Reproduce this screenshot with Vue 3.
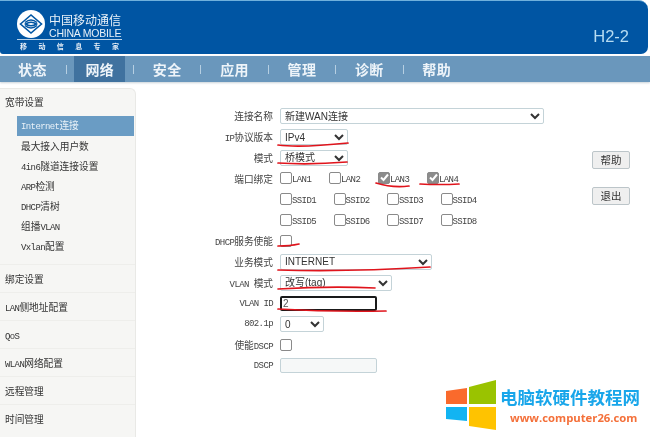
<script setup>
const navItems = [
  { label: '状态' }, { label: '网络', active: true }, { label: '安全' }, { label: '应用' },
  { label: '管理' }, { label: '诊断' }, { label: '帮助' }
]
const subItems = ['Internet连接', '最大接入用户数', '4in6隧道连接设置', 'ARP检测', 'DHCP清树', '组播VLAN', 'Vxlan配置']
const menuItems = ['绑定设置', 'LAN侧地址配置', 'QoS', 'WLAN网络配置', '远程管理', '时间管理']
const lanPorts = [
  { name: 'LAN1', checked: false }, { name: 'LAN2', checked: false },
  { name: 'LAN3', checked: true }, { name: 'LAN4', checked: true }
]
const ssidRows = [['SSID1', 'SSID2', 'SSID3', 'SSID4'], ['SSID5', 'SSID6', 'SSID7', 'SSID8']]
const scribbles = [
  'M278 145 Q300 148 348 143',
  'M278 163 Q310 165 347 162',
  'M376 183 Q392 188 409 186',
  'M420 184 Q440 185 459 184',
  'M278 246 Q290 246 299 244',
  'M278 270 Q350 272 430 267',
  'M278 289 Q330 286 375 288',
  'M278 309 Q330 312 386 311'
]
// Latin runs are condensed against CJK, like the half-width glyphs of the original bitmap font
const runs = (text) => (text.match(/[\x20-\x7e]+|[^\x20-\x7e]+/g) || []).map((t) => ({
  t,
  latin: /^[\x20-\x7e]/.test(t)
}))
</script>

<template>
  <div class="page">
    <header class="top">
      <div class="logo">
        <div class="logo-main">
          <svg class="logo-mark" width="28" height="28" viewBox="0 0 28 28">
            <circle cx="14" cy="14" r="14" fill="#fff" />
            <g fill="none" stroke="#0055a3" stroke-width="1.6">
              <path d="M3.5 14 L14 5 L24.5 14 L14 23 Z" />
              <path d="M8 12.5 Q14 7.5 20 12.5" />
              <path d="M8 15.5 Q14 20.5 20 15.5" />
              <path d="M8.5 14 Q14 10.5 19.5 14 Q14 17.5 8.5 14Z" />
            </g>
          </svg>
          <div class="logo-names">
            <div class="logo-cn">中国移动通信</div>
            <div class="logo-en">CHINA MOBILE</div>
          </div>
        </div>
        <div class="logo-slogan"><span>移</span><span>动</span><span>信</span><span>息</span><span>专</span><span>家</span></div>
      </div>
      <div class="model">H2-2</div>
    </header>

    <nav class="nav">
      <template v-for="(item, i) in navItems" :key="item.label">
        <span class="nav-item" :class="{ active: item.active }">{{ item.label }}</span>
        <i v-if="i < navItems.length - 1" class="nav-sep"></i>
      </template>
    </nav>

    <div class="body">
      <aside class="side">
        <div class="side-head">宽带设置</div>
        <ul class="sub">
          <li v-for="(s, i) in subItems" :key="s" :class="{ current: i === 0 }">
            <span v-for="r in runs(s)" :key="r.t" :class="{ lat: r.latin }">{{ r.t }}</span>
          </li>
        </ul>
        <div v-for="m in menuItems" :key="m" class="menu-row">
          <span v-for="r in runs(m)" :key="r.t" :class="{ lat: r.latin }">{{ r.t }}</span>
        </div>
      </aside>

      <main class="main">
        <form class="form">
          <label class="lbl">连接名称</label>
          <div class="ctl"><select class="sel w-name"><option>新建WAN连接</option></select></div>

          <label class="lbl"><span class="lat">IP</span>协议版本</label>
          <div class="ctl"><select class="sel w-short"><option>IPv4</option></select></div>

          <label class="lbl">模式</label>
          <div class="ctl"><select class="sel w-short"><option>桥模式</option></select></div>

          <label class="lbl">端口绑定</label>
          <div class="ctl ports lan">
            <span v-for="p in lanPorts" :key="p.name" class="port">
              <span class="box" :class="{ on: p.checked }">
                <svg v-if="p.checked" width="11" height="11" viewBox="0 0 11 11"><path d="M2 5.5 L4.5 8 L9 2.5" fill="none" stroke="#fff" stroke-width="2" /></svg>
              </span>{{ p.name }}
            </span>
          </div>

          <template v-for="row in ssidRows" :key="row[0]">
            <span></span>
            <div class="ctl ports ssid">
              <span v-for="p in row" :key="p" class="port"><span class="box"></span>{{ p }}</span>
            </div>
          </template>

          <label class="lbl"><span class="lat">DHCP</span>服务使能</label>
          <div class="ctl"><span class="box"></span></div>

          <label class="lbl">业务模式</label>
          <div class="ctl"><select class="sel w-biz"><option>INTERNET</option></select></div>

          <label class="lbl"><span class="lat">VLAN </span>模式</label>
          <div class="ctl"><select class="sel w-vlan"><option>改写(tag)</option></select></div>

          <label class="lbl lat">VLAN ID</label>
          <div class="ctl"><input class="inp focus" value="2" /></div>

          <label class="lbl lat">802.1p</label>
          <div class="ctl"><select class="sel w-p"><option>0</option></select></div>

          <label class="lbl">使能<span class="lat">DSCP</span></label>
          <div class="ctl"><span class="box"></span></div>

          <label class="lbl lat">DSCP</label>
          <div class="ctl"><input class="inp off" /></div>
        </form>

        <div class="actions">
          <button type="button" class="btn">帮助</button>
          <button type="button" class="btn">退出</button>
        </div>
      </main>
    </div>

    <svg class="ink" width="650" height="437" viewBox="0 0 650 437">
      <path v-for="d in scribbles" :key="d" :d="d" fill="none" stroke="#e0141c" stroke-width="1.7" stroke-linecap="round" />
    </svg>

    <div class="mark">
      <svg class="win" width="50" height="50" viewBox="0 0 50 50">
        <polygon points="0,11 21,8 21,24 0,24" fill="#fa6a2c" />
        <polygon points="23,7 50,0 50,24 23,24" fill="#9ac300" />
        <polygon points="0,27 21,27 21,41 0,39" fill="#12b4f2" />
        <polygon points="23,27 50,27 50,50 23,46" fill="#ffc300" />
      </svg>
      <div class="mark-text">
        <div class="mark-cn">电脑软硬件教程网</div>
        <div class="mark-url">www.computer26.com</div>
      </div>
    </div>
  </div>
</template>

<style scoped>
.page {
  position: relative;
  width: 650px;
  height: 437px;
  overflow: hidden;
  background: #fff;
  font-family: "Noto Sans CJK SC", sans-serif;
  color: #333;
  filter: blur(0.35px);
}
.lat {
  font-family: "Liberation Mono", monospace;
  font-size: 9px;
  letter-spacing: -0.6px;
  line-height: 1;
}
.top {
  height: 54px;
  margin-right: 2px;
  display: flex;
  justify-content: space-between;
  background: #0055a3;
  border-top: 1px solid #6fb0dc;
  border-radius: 0 9px 7px 3px;
  box-sizing: border-box;
}
.logo { padding: 9px 0 0 17px; width: 106px; }
.logo-main { display: flex; gap: 4px; height: 29px; }
.logo-mark { flex: none; }
.logo-names { color: #e8f1f8; }
.logo-cn { font-size: 12px; line-height: 14px; margin-top: 3px; white-space: nowrap; }
.logo-en {
  font-family: "Liberation Sans", sans-serif;
  font-size: 10.5px;
  line-height: 12px;
  letter-spacing: -0.2px;
  white-space: nowrap;
}
.logo-slogan {
  display: flex;
  justify-content: space-between;
  width: 105px;
  padding: 2px 3px 0;
  box-sizing: border-box;
  border-top: 1px solid #b8d2e8;
  color: #e6eff7;
  font: 700 7px/9px "Noto Sans CJK SC", sans-serif;
}
.model {
  padding: 26px 19px 0 0;
  font: 16.5px/18px "Liberation Sans", sans-serif;
  color: #b6dcf2;
}
.nav {
  margin-top: 2px;
  height: 26px;
  display: flex;
  align-items: stretch;
  padding-left: 7px;
  background: #6a97bc;
  box-shadow: 0 1px 2px #c9d2d8;
  color: #eef4f9;
  font: 700 14px/26px "Noto Sans CJK SC", sans-serif;
}
.nav-item { width: 51px; text-align: center; letter-spacing: 0.5px; }
.nav-item.active { background: #40729f; }
.nav-sep {
  width: 1px;
  height: 9px;
  margin: 9px 7.7px 0;
  background: #b6cfe2;
}
.body { display: flex; padding-top: 6px; }
.side {
  flex: none;
  width: 136px;
  height: 349px;
  box-sizing: border-box;
  background: #f6f6f4;
  border: 1px solid #e9e9e6;
  border-left: 0;
  border-bottom: 0;
  border-radius: 0 6px 0 0;
  font-size: 9.7px;
  color: #333;
}
.side-head { height: 27px; padding-left: 5px; line-height: 27px; }
.sub { list-style: none; margin: 0; padding: 0 1px 0 17px; height: 148px; }
.sub li { height: 20px; line-height: 20px; padding-left: 4px; }
.sub li.current { background: #6a9cc4; color: #e8f1f8; line-height: 18px; }
.menu-row {
  height: 28px;
  line-height: 28px;
  padding-left: 5px;
  border-top: 1px solid #eeeeeb;
  box-sizing: border-box;
}
.main { flex: 1; display: flex; }
.form {
  width: 456px;
  flex: none;
  display: grid;
  grid-template-columns: 144px 1fr;
  grid-auto-rows: 20.8px;
  padding-top: 18px;
  align-content: start;
}
.lbl {
  padding-right: 7px;
  align-self: center;
  text-align: right;
  font-size: 9.7px;
  line-height: 14px;
  white-space: pre;
  color: #444;
}
.lbl.lat { font-size: 9px; line-height: 14px; }
.ctl { display: flex; align-items: center; }
.sel {
  height: 16px;
  box-sizing: border-box;
  padding: 0;
  background: #fff;
  border: 1px solid #c4d3d8;
  border-radius: 2px;
  color: #333;
  font: 10px "Liberation Sans", "Noto Sans CJK SC", sans-serif;
}
.w-name { width: 264px; }
.w-short { width: 68px; }
.w-biz { width: 152px; }
.w-vlan { width: 112px; }
.w-p { width: 44px; }
.ports { font: 9px "Liberation Mono", monospace; letter-spacing: -0.6px; color: #444; }
.port { display: flex; align-items: flex-end; }
.lan .port { width: 49px; }
.ssid .port { width: 53.5px; }
.box {
  flex: none;
  display: block;
  width: 10px;
  height: 10px;
  background: #fff;
  border: 1px solid #8a8a8a;
  border-radius: 2px;
  margin-bottom: 1px;
}
.box.on { background: #8c8c8c; }
.box.on svg { display: block; margin: -1px 0 0 0; }
.inp {
  width: 97px;
  height: 15px;
  padding: 0 1px;
  box-sizing: border-box;
  font: 10px "Liberation Sans", sans-serif;
  color: #555;
  outline: none;
}
.inp.focus { border: 2px solid #1a1a1a; border-radius: 2px; }
.inp.off { background: #f6f8f8; border: 1px solid #c4d3d8; border-radius: 2px; }
.actions {
  flex: none;
  display: flex;
  flex-direction: column;
  gap: 18px;
  padding-top: 63px;
}
.btn {
  width: 38px;
  height: 18px;
  padding: 0;
  background: #efefef;
  border: 1px solid #bcc5c9;
  border-radius: 2px;
  color: #333;
  font: 10.5px/14px "Noto Sans CJK SC", sans-serif;
}
.ink { position: absolute; left: 0; top: 0; pointer-events: none; }
.mark {
  position: absolute;
  left: 446px;
  top: 380px;
  display: flex;
  gap: 4px;
}
.mark-text { padding-top: 6px; }
.mark-cn {
  font: 700 17.5px/21px "Noto Sans CJK SC", sans-serif;
  color: #19a6ea;
  white-space: nowrap;
}
.mark-url {
  margin: 4px 0 0 10px;
  font: 700 11.3px/14px "Open Sans", sans-serif;
  color: #f4703a;
  white-space: nowrap;
}
</style>
